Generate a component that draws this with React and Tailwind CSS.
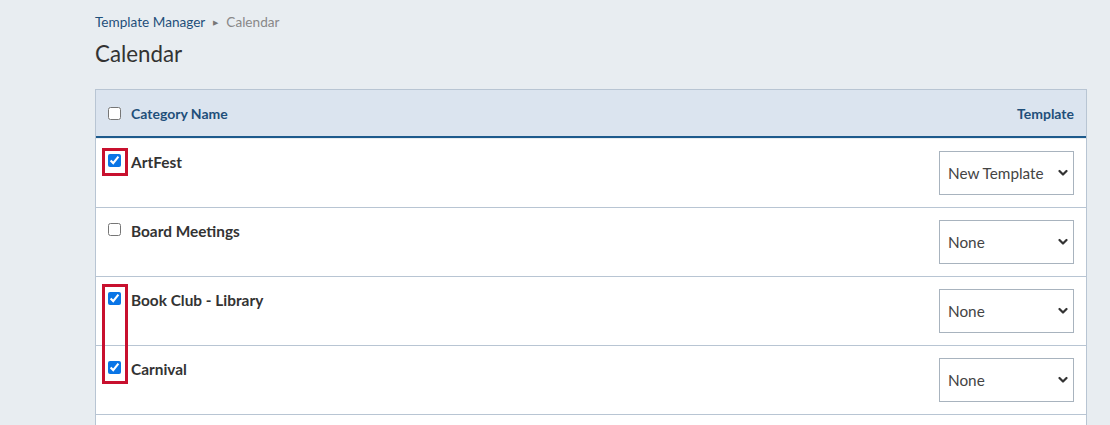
import { useState } from 'react';

const rows = [
  { id: 1, name: 'ArtFest', checked: true, template: 'New Template' },
  { id: 2, name: 'Board Meetings', checked: false, template: 'None' },
  { id: 3, name: 'Book Club - Library', checked: true, template: 'None' },
  { id: 4, name: 'Carnival', checked: true, template: 'None' },
];

function Chevron() {
  return (
    <svg width="10" height="7" viewBox="0 0 10 7" className="pointer-events-none absolute right-[6px] top-1/2 -translate-y-1/2">
      <path d="M1.5 1.5 L5 5 L8.5 1.5" fill="none" stroke="#333" strokeWidth="2.2" strokeLinecap="round" strokeLinejoin="round" />
    </svg>
  );
}

function Row({ row, onToggle }) {
  return (
    <div className="flex h-[69px] border-b border-[#b8c5d3] bg-white">
      <label className="flex flex-1 items-start gap-[10px] pl-[12px] pt-[13px]">
        <input
          type="checkbox"
          checked={row.checked}
          onChange={() => onToggle(row.id)}
          className="mt-[2px] h-[13px] w-[13px] accent-[#0a75e6]"
        />
        <span className="text-[15.4px] leading-[20px] font-bold text-[#333]">{row.name}</span>
      </label>
      <div className="pr-[12px] pt-[12px]">
        <div className="relative">
          <select
            defaultValue={row.template}
            className="h-[44px] w-[135px] appearance-none border border-[#a8b3be] bg-white pl-[8px] text-[15.3px] text-[#444] outline-none"
          >
            <option>None</option>
            <option>New Template</option>
          </select>
          <Chevron />
        </div>
      </div>
    </div>
  );
}

export default function App() {
  const [items, setItems] = useState(rows);
  const toggle = (id) => setItems((items) => items.map((r) => (r.id === id ? { ...r, checked: !r.checked } : r)));

  return (
    <div className="h-screen overflow-hidden bg-[#e8edf1] pl-[95px] pr-[23px] pt-[13px] font-['Lato','Open_Sans',sans-serif]">
      <nav className="flex h-[18px] items-center gap-[8px] text-[13.6px] leading-[18px]">
        <a className="text-[#1f4f7a]">Template Manager</a>
        <span className="text-[7px] text-[#777]">▶</span>
        <span className="text-[#888]">Calendar</span>
      </nav>
      <h1 className="mt-[9px] text-[22.3px] leading-[28px] text-[#333]">Calendar</h1>

      <div className="relative mt-[21px] border-x border-t border-[#b8c5d3]">
        <div className="flex h-[48px] items-center border-b-2 border-[#1d5a8c] bg-[#dbe4ef] px-[12px]">
          <input type="checkbox" className="h-[13px] w-[13px]" />
          <span className="ml-[10px] flex-1 text-[14px] font-bold text-[#1f4f7a]">Category Name</span>
          <span className="text-[14px] font-bold text-[#1f4f7a]">Template</span>
        </div>
        <div className="h-[1px]" />
        {items.map((row) => (
          <Row key={row.id} row={row} onToggle={toggle} />
        ))}
        <div className="h-[69px] bg-white" />

        <div className="absolute left-[6px] top-[58px] h-[28px] w-[26px] border-[3px] border-[#c8102e]" />
        <div className="absolute left-[6px] top-[194px] h-[100px] w-[26px] border-[3px] border-[#c8102e]" />
      </div>
    </div>
  );
}
